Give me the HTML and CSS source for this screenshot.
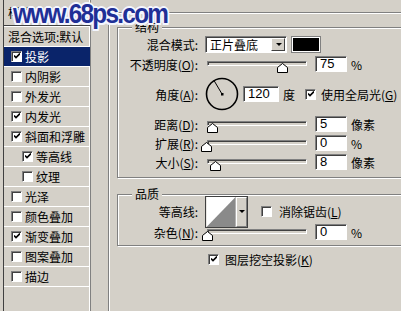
FILE: index.html
```html
<!DOCTYPE html>
<html lang="zh-CN">
<head>
    <meta charset="UTF-8">
    <title>图层样式 - 投影</title>
    <link rel="stylesheet" href="styles.css">
</head>
<body>

    <div class="dialog">
        <!-- Левый список стилей -->
        <aside class="styles">
            <div class="styles-head">样式</div>
            <ul class="style-list">
                <li class="style-item plain">混合选项:默认</li>
                <li class="style-item selected"><span class="check on"></span>投影</li>
                <li class="style-item"><span class="check"></span>内阴影</li>
                <li class="style-item"><span class="check"></span>外发光</li>
                <li class="style-item"><span class="check on"></span>内发光</li>
                <li class="style-item"><span class="check on"></span>斜面和浮雕</li>
                <li class="style-item sub"><span class="check on"></span>等高线</li>
                <li class="style-item sub"><span class="check"></span>纹理</li>
                <li class="style-item"><span class="check"></span>光泽</li>
                <li class="style-item"><span class="check"></span>颜色叠加</li>
                <li class="style-item"><span class="check on"></span>渐变叠加</li>
                <li class="style-item"><span class="check"></span>图案叠加</li>
                <li class="style-item"><span class="check"></span>描边</li>
            </ul>
        </aside>

        <!-- Панель настроек -->
        <main class="panel">
            <div class="outer">
                <div class="group structure">
                    <span class="legend">结构</span>

                    <div class="row">
                        <span class="label">混合模式:</span>
                        <div class="select"><span>正片叠底</span><span class="drop"></span></div>
                        <span class="swatch"></span>
                    </div>

                    <div class="row">
                        <span class="label">不透明度(<u>O</u>):</span>
                        <div class="slider"><div class="track"></div><span class="thumb" style="left: 72px"></span></div>
                        <span class="field">75</span>
                        <span class="unit">%</span>
                    </div>

                    <div class="row angle-row">
                        <span class="label">角度(<u>A</u>):</span>
                        <svg class="dial" width="34" height="34" viewBox="0 0 34 34">
                            <circle cx="17" cy="17" r="15.5" fill="none" stroke="#000" stroke-width="1.6"/>
                            <line x1="17" y1="17" x2="9" y2="3.5" stroke="#000" stroke-width="1"/>
                            <rect x="16" y="16" width="2.5" height="2.5" fill="#000"/>
                        </svg>
                        <span class="field wide">120</span>
                        <span class="unit">度</span>
                        <span class="check on global"></span>
                        <span class="text">使用全局光(<u>G</u>)</span>
                    </div>

                    <div class="row">
                        <span class="label">距离(<u>D</u>):</span>
                        <div class="slider"><div class="track"></div><span class="thumb" style="left: 2px"></span></div>
                        <span class="field">5</span>
                        <span class="unit">像素</span>
                    </div>

                    <div class="row">
                        <span class="label">扩展(<u>R</u>):</span>
                        <div class="slider"><div class="track"></div><span class="thumb" style="left: -4px"></span></div>
                        <span class="field">0</span>
                        <span class="unit">%</span>
                    </div>

                    <div class="row">
                        <span class="label">大小(<u>S</u>):</span>
                        <div class="slider"><div class="track"></div><span class="thumb" style="left: 5px"></span></div>
                        <span class="field">8</span>
                        <span class="unit">像素</span>
                    </div>
                </div>

                <div class="group quality">
                    <span class="legend">品质</span>

                    <div class="row contour-row">
                        <span class="label">等高线:</span>
                        <div class="contour">
                            <svg width="31" height="32" viewBox="0 0 31 32">
                                <rect width="31" height="32" fill="#fff"/>
                                <polygon points="0,32 31,0 31,32" fill="#8a8a8a"/>
                            </svg>
                            <span class="drop small"></span>
                        </div>
                        <span class="check anti"></span>
                        <span class="text">消除锯齿(<u>L</u>)</span>
                    </div>

                    <div class="row">
                        <span class="label">杂色(<u>N</u>):</span>
                        <div class="slider"><div class="track"></div><span class="thumb" style="left: -3px"></span></div>
                        <span class="field">0</span>
                        <span class="unit">%</span>
                    </div>
                </div>

                <div class="knockout">
                    <span class="check on"></span>
                    <span class="text">图层挖空投影(<u>K</u>)</span>
                </div>
            </div>
        </main>
    </div>

    <!-- Водяной знак -->
    <div class="watermark">www.68ps.com</div>

</body>
</html>
```

FILE: styles.css
```css
body {
    margin: 0;
    padding: 0;
    width: 401px;
    height: 311px;
    overflow: hidden;
    background-color: #d4d0c8;
    font-family: 'Noto Sans CJK SC', 'Liberation Sans', sans-serif;
    font-size: 12px;
    color: #000;
    position: relative;
}

u {
    text-decoration: underline;
    text-underline-offset: 1px;
}

.dialog {
    display: flex;
    height: 311px;
}

/* Список стилей слева */
.styles {
    margin-left: 3px;
    width: 88px;
    flex-shrink: 0;
    box-sizing: border-box;
    border-left: 1px solid #404040;
    border-right: 1px solid #808080;
    box-shadow: inset -1px 0 #fff;
    height: 330px;
}

.styles-head {
    height: 26px;
    padding: 4px 0 0 4px;
    box-sizing: border-box;
    border-bottom: 1px solid #404040;
    line-height: 18px;
}

.style-list {
    list-style: none;
    margin: 0;
    padding: 0;
    border-top: 1px solid #fff;
}

.style-item {
    height: 20px;
    box-sizing: border-box;
    border-bottom: 1px solid #fff;
    display: flex;
    align-items: center;
    gap: 3px;
    padding-left: 7px;
    line-height: 18px;
    white-space: nowrap;
}

.style-item.plain {
    padding-left: 4px;
}

.style-item.sub {
    padding-left: 18px;
}

.style-item.selected {
    background-color: #0a246a;
    color: #fff;
}

/* Флажок */
.check {
    width: 11px;
    height: 11px;
    box-sizing: border-box;
    background-color: #fff;
    border: 1px solid;
    border-color: #808080 #fff #fff #808080;
    box-shadow: inset 1px 1px #404040;
    flex-shrink: 0;
    position: relative;
}

.check.on::after {
    content: '';
    position: absolute;
    left: 2px;
    top: 1px;
    width: 6px;
    height: 6px;
    background: url("data:image/svg+xml;utf8,<svg xmlns='http://www.w3.org/2000/svg' width='6' height='6' viewBox='0 0 6 6'><path d='M0 2.5 L2 4.5 L6 0.5' stroke='black' stroke-width='1.6' fill='none'/></svg>") no-repeat;
}

/* Правая панель */
.panel {
    flex: 1;
    padding: 12px 0 0 17px;
    min-width: 0;
}

.outer {
    border: 1px solid #808080;
    border-right: none;
    box-shadow: inset 1px 1px #fff;
    padding: 14px 0 0 8px;
    height: 320px;
    margin-right: -30px;
}

.group {
    position: relative;
    border: 1px solid #808080;
    box-shadow: inset 1px 1px #fff, 1px 1px #fff;
    margin-right: -10px;
    display: flex;
    flex-direction: column;
    gap: 3px;
}

.structure {
    padding: 8px 0 7px 0;
}

.quality {
    margin-top: 16px;
    padding: 8px 0 5px 0;
    gap: 4px;
}

.legend {
    position: absolute;
    top: -9px;
    left: 14px;
    padding: 0 3px;
    background-color: #d4d0c8;
    line-height: 16px;
}

.row {
    display: flex;
    align-items: center;
    height: 16px;
}

.row:first-of-type {
    height: 17px;
}

.label {
    width: 80px;
    text-align: right;
    margin-right: 7px;
    white-space: nowrap;
    flex-shrink: 0;
}

.angle-row {
    height: 34px;
    margin: 2px 0;
}

.contour-row {
    height: 32px;
}

.text {
    white-space: nowrap;
}

/* Выпадающий список */
.select {
    width: 82px;
    height: 17px;
    box-sizing: border-box;
    background-color: #fff;
    border: 1px solid;
    border-color: #808080 #fff #fff #808080;
    box-shadow: inset 1px 1px #404040;
    display: flex;
    align-items: center;
    justify-content: space-between;
    padding: 1px 1px 1px 4px;
    line-height: 14px;
}

.drop {
    width: 14px;
    height: 13px;
    box-sizing: border-box;
    background-color: #d4d0c8;
    border: 1px solid;
    border-color: #fff #404040 #404040 #fff;
    position: relative;
}

.drop::after {
    content: '';
    position: absolute;
    left: 4px;
    top: 4px;
    border-left: 3px solid transparent;
    border-right: 3px solid transparent;
    border-top: 3px solid #000;
}

.swatch {
    width: 26px;
    height: 13px;
    margin-left: 5px;
    background-color: #000;
    border: 1px solid #fff;
    outline: 1px solid #808080;
}

/* Ползунок */
.slider {
    position: relative;
    width: 104px;
    height: 16px;
    flex-shrink: 0;
}

.track {
    margin: 5px 2px 0 2px;
    height: 5px;
    box-sizing: border-box;
    border: 1px solid;
    border-color: #808080 #fff #fff #808080;
    box-shadow: inset 1px 1px #404040;
    background-color: #d4d0c8;
}

.thumb {
    position: absolute;
    top: 7px;
    width: 11px;
    height: 10px;
    background: url("data:image/svg+xml;utf8,<svg xmlns='http://www.w3.org/2000/svg' width='11' height='10' viewBox='0 0 11 10'><polygon points='5.5,0.5 10.5,4.5 10.5,9.5 0.5,9.5 0.5,4.5' fill='white' stroke='black' stroke-width='1'/></svg>") no-repeat;
}

/* Поле ввода */
.field {
    width: 32px;
    height: 16px;
    box-sizing: border-box;
    margin-left: 6px;
    background-color: #fff;
    border: 1px solid;
    border-color: #808080 #fff #fff #808080;
    box-shadow: inset 1px 1px #404040;
    padding-left: 4px;
    font-family: 'Liberation Sans', sans-serif;
    font-size: 13px;
    line-height: 14px;
}

.field.wide {
    width: 36px;
}

.unit {
    margin-left: 4px;
    font-size: 12px;
}

.dial {
    flex-shrink: 0;
}

.angle-row .field {
    margin-left: 4px;
}

.check.global {
    margin-left: 10px;
    margin-right: 5px;
}

/* Контур */
.contour {
    display: flex;
    border: 1px solid #404040;
    height: 32px;
    box-sizing: border-box;
}

.contour svg {
    display: block;
    width: 30px;
    height: 30px;
}

.drop.small {
    width: 11px;
    height: 30px;
    border-color: #fff #808080 #808080 #fff;
}

.drop.small::after {
    left: 2px;
    top: 12px;
}

.check.anti {
    margin-left: 13px;
    margin-right: 7px;
}

.knockout {
    display: flex;
    align-items: center;
    gap: 6px;
    margin: 6px 0 0 91px;
    height: 14px;
}

/* Водяной знак */
.watermark {
    position: absolute;
    left: 13px;
    top: -2px;
    font-family: 'Liberation Sans', sans-serif;
    font-weight: bold;
    font-size: 28px;
    letter-spacing: -2px;
    color: #1f2f96;
    transform: scaleX(0.87);
    transform-origin: left top;
    text-shadow:
        2px 0 #f4f6ff, -2px 0 #f4f6ff, 0 2px #f4f6ff, 0 -2px #f4f6ff,
        1.5px 1.5px #f4f6ff, -1.5px 1.5px #f4f6ff, 1.5px -1.5px #f4f6ff, -1.5px -1.5px #f4f6ff;
}
```
